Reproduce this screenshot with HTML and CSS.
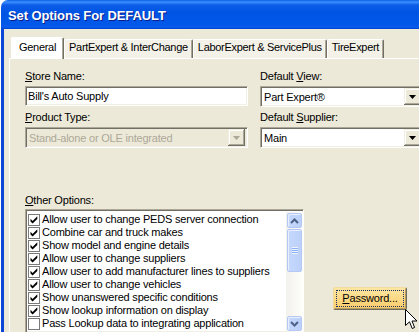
FILE: index.html
```html
<!DOCTYPE html>
<html lang="en">
<head>
    <meta charset="UTF-8">
    <title>Set Options For DEFAULT</title>
    <link rel="stylesheet" href="styles.css">
</head>
<body>
    <div class="window">
        <div class="titlebar"><span class="title">Set Options For DEFAULT</span></div>
        <div class="frame">
            <div class="tabs">
                <div class="tab active">General</div>
                <div class="tab">PartExpert &amp; InterChange</div>
                <div class="tab">LaborExpert &amp; ServicePlus</div>
                <div class="tab">TireExpert</div>
            </div>
            <div class="panel">
                <div class="fields">
                    <div class="field">
                        <label><u>S</u>tore Name:</label>
                        <div class="edit">Bill's Auto Supply</div>
                    </div>
                    <div class="field">
                        <label>Default <u>V</u>iew:</label>
                        <div class="combo">
                            <span class="value">Part Expert®</span>
                            <span class="drop"><svg width="7" height="4" viewBox="0 0 7 4"><path d="M0 0h7L3.5 4z"/></svg></span>
                        </div>
                    </div>
                    <div class="field">
                        <label><u>P</u>roduct Type:</label>
                        <div class="combo disabled">
                            <span class="value">Stand-alone or OLE integrated</span>
                            <span class="drop"><svg width="7" height="4" viewBox="0 0 7 4"><path d="M0 0h7L3.5 4z"/></svg></span>
                        </div>
                    </div>
                    <div class="field">
                        <label>Default <u>S</u>upplier:</label>
                        <div class="combo">
                            <span class="value">Main</span>
                            <span class="drop"><svg width="7" height="4" viewBox="0 0 7 4"><path d="M0 0h7L3.5 4z"/></svg></span>
                        </div>
                    </div>
                </div>

                <label class="other-label"><u>O</u>ther Options:</label>
                <div class="lower">
                    <div class="listbox">
                        <ul class="items">
                            <li><span class="check on"></span>Allow user to change PEDS server connection</li>
                            <li><span class="check on"></span>Combine car and truck makes</li>
                            <li><span class="check on"></span>Show model and engine details</li>
                            <li><span class="check on"></span>Allow user to change suppliers</li>
                            <li><span class="check on"></span>Allow user to add manufacturer lines to suppliers</li>
                            <li><span class="check on"></span>Allow user to change vehicles</li>
                            <li><span class="check on"></span>Show unanswered specific conditions</li>
                            <li><span class="check on"></span>Show lookup information on display</li>
                            <li><span class="check"></span>Pass Lookup data to integrating application</li>
                        </ul>
                        <div class="scrollbar">
                            <div class="sb-btn">
                                <svg width="9" height="6" viewBox="0 0 9 6"><path d="M1 5l3.5-3.5L8 5" fill="none" stroke="#4d6185" stroke-width="2"/></svg>
                            </div>
                            <div class="sb-thumb"><span class="grip"></span></div>
                            <div class="sb-track"></div>
                            <div class="sb-btn">
                                <svg width="9" height="6" viewBox="0 0 9 6"><path d="M1 1l3.5 3.5L8 1" fill="none" stroke="#4d6185" stroke-width="2"/></svg>
                            </div>
                        </div>
                    </div>
                    <button class="btn"><span class="focus"><u>P</u>assword...</span></button>
                </div>
            </div>
        </div>
    </div>

    <svg class="cursor" width="13" height="21" viewBox="0 0 13 21">
        <path d="M0.5 0.5V16.5L4.5 12.8L7.2 19.5L9.6 18.5L7 12H12Z" fill="#fff" stroke="#000" stroke-width="1" stroke-linejoin="miter"/>
    </svg>

    <script>
        // checkmarks for the option list
        document.querySelectorAll('.check.on').forEach(function(box) {
            box.innerHTML = '<svg width="10" height="10" viewBox="0 0 10 10"><path d="M1.5 3.8L3.6 5.9L8.3 1.2V3.9L3.6 8.6L1.5 6.5Z"/></svg>';
        });
    </script>
</body>
</html>
```

FILE: styles.css
```css
body {
    margin: 0;
    padding-left: 1px;
    width: 419px;
    height: 332px;
    box-sizing: border-box;
    overflow: hidden;
    position: relative;
    background: #fff;
    font-family: "Liberation Sans", Arial, sans-serif;
    font-size: 11px;
    letter-spacing: -0.2px;
    color: #000;
}
.window {
    width: 440px;
    height: 100%;
    display: flex;
    flex-direction: column;
}
.titlebar {
    height: 29px;
    flex-shrink: 0;
    box-sizing: border-box;
    padding: 2px 0 0 7px;
    display: flex;
    align-items: center;
    border-top-left-radius: 7px;
    background: linear-gradient(to bottom, #0a5fe8 0, #3d8ffd 2px, #0b5de8 5px, #0054e3 45%, #0058e9 85%, #0a5cec 93%, #0042d0 100%);
}
.title {
    color: #fff;
    font-weight: bold;
    font-size: 13px;
    letter-spacing: -0.1px;
    text-shadow: 1px 1px #0c1d8a;
}
.frame {
    flex: 1;
    display: flex;
    flex-direction: column;
    background: #ece9d8;
    border-left: 3px solid #0a47d6;
    padding: 8px 0 0 5px;
}
.tabs {
    display: flex;
    align-items: flex-end;
    height: 21px;
    padding-left: 2px;
    position: relative;
    z-index: 1;
}
.tab {
    height: 19px;
    box-sizing: border-box;
    padding: 0 4px;
    line-height: 14px;
    letter-spacing: -0.3px;
    background: #f3f1e8;
    border: 1px solid #fff;
    border-bottom: 0;
    border-right-color: #716f64;
    box-shadow: inset -1px 0 #aca899;
    border-radius: 2px 2px 0 0;
    white-space: nowrap;
}
.tab.active {
    height: 22px;
    margin-bottom: -1px;
    padding: 2px 7px 0;
    background: #fff;
}
.panel {
    flex: 1;
    border-top: 1px solid #fff;
    border-left: 1px solid #fff;
    padding: 11px 0 0 15px;
}
.fields {
    display: grid;
    grid-template-columns: 223px 164px;
    column-gap: 12px;
    row-gap: 4px;
}
.field label, .other-label {
    display: block;
    line-height: 13px;
    margin-bottom: 3px;
}
.edit, .combo, .listbox {
    box-sizing: border-box;
    background: #fff;
    border: 1px solid;
    border-color: #aca899 #fff #fff #aca899;
    box-shadow: inset 1px 1px #716f64, inset -1px -1px #f1efe2;
}
.edit {
    height: 20px;
    line-height: 18px;
    padding-left: 2px;
}
.combo {
    height: 21px;
    display: flex;
    align-items: center;
    padding: 2px;
}
.combo .value {
    flex: 1;
    padding-left: 1px;
    white-space: nowrap;
}
.drop {
    width: 17px;
    height: 17px;
    box-sizing: border-box;
    display: flex;
    align-items: center;
    justify-content: center;
    background: #ece9d8;
    box-shadow: inset -1px -1px #716f64, inset 1px 1px #f1efe2, inset -2px -2px #aca899, inset 2px 2px #fff;
}
.drop svg {
    fill: #000;
}
.combo.disabled {
    background: #ece9d8;
    color: #aca899;
}
.combo.disabled .drop svg {
    fill: #aca899;
}
.other-label {
    margin-top: 46px;
    margin-bottom: 2px;
}
.lower {
    display: flex;
    align-items: flex-start;
}
.listbox {
    width: 279px;
    height: 124px;
    display: flex;
    padding: 2px 0 0 2px;
}
.items {
    flex: 1;
    list-style: none;
    margin: 0;
    padding: 1px 0 0;
    overflow: hidden;
}
.items li {
    height: 13px;
    line-height: 13px;
    white-space: nowrap;
    display: flex;
}
.check {
    width: 12px;
    height: 12px;
    box-sizing: border-box;
    margin: 1px 2px 0 0;
    flex-shrink: 0;
    border: 1px solid #7a7a7a;
    background: #fff;
    display: flex;
    align-items: center;
    justify-content: center;
}
.scrollbar {
    width: 17px;
    height: 120px;
    display: flex;
    flex-direction: column;
    background: linear-gradient(to right, #f3f1ec, #fefefb);
}
.sb-btn, .sb-thumb {
    margin: 1px;
    box-sizing: border-box;
    border: 1px solid #b5c8f3;
    border-radius: 2px;
    background: linear-gradient(to right, #c6d8fc, #bcd0fa);
    box-shadow: inset 1px 1px #e8effe;
}
.sb-btn {
    height: 15px;
    display: flex;
    align-items: center;
    justify-content: center;
}
.sb-thumb {
    height: 43px;
    margin-top: 0;
    display: flex;
    align-items: center;
    justify-content: center;
}
.grip {
    width: 6px;
    height: 7px;
    background: repeating-linear-gradient(to bottom, #eef4fe 0, #eef4fe 1px, #8cb0f8 1px, #8cb0f8 2px);
}
.sb-track {
    flex: 1;
}
.btn {
    margin: 78px 0 0 29px;
    width: 74px;
    height: 23px;
    padding: 0 2px;
    font: inherit;
    letter-spacing: inherit;
    color: #000;
    background: linear-gradient(to bottom, #fde6a0, #f9cc6a);
    border: 1px solid;
    border-color: #f3dca0 #6e6a5d #6e6a5d #f1d99b;
    border-radius: 2px;
    box-shadow: inset -1px -1px #b89d5a;
}
.focus {
    display: block;
    line-height: 15px;
    border: 1px dotted #1b2c6b;
}
.cursor {
    position: absolute;
    left: 405px;
    top: 309px;
}
```
